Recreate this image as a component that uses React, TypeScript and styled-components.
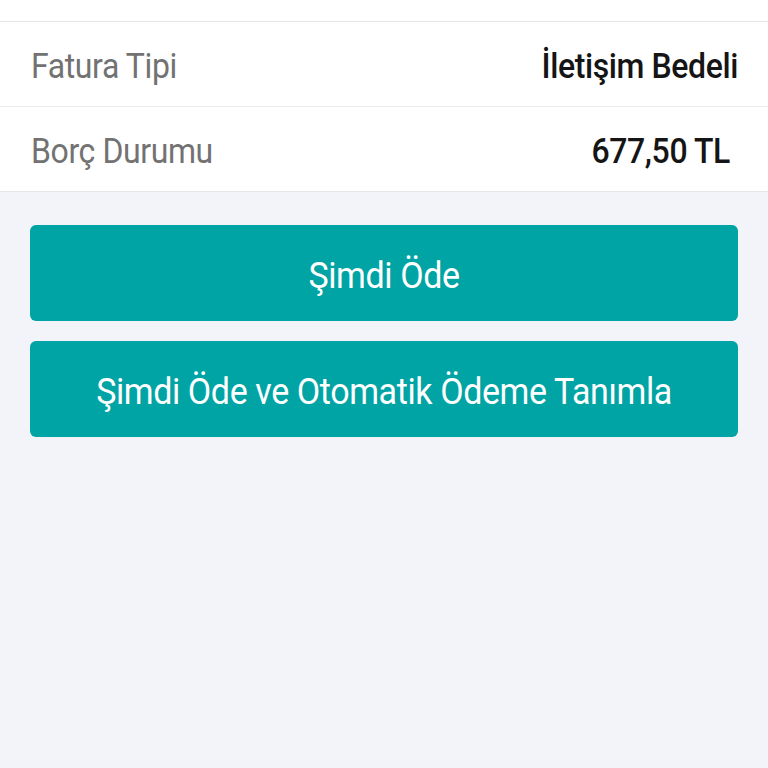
import { createGlobalStyle, styled } from "styled-components"

const GlobalStyle = createGlobalStyle`
  html, body {
    margin: 0;
    padding: 0;
    background: #f3f4f9;
    font-family: Roboto, "Noto Sans", sans-serif;
  }
  * { box-sizing: border-box; }
`

const Page = styled.div`
  min-height: 768px;
  background: #f3f4f9;
`

const TopStrip = styled.div`
  height: 22px;
  background: #ffffff;
  border-bottom: 1px solid #e6e7eb;
`

const InfoList = styled.div`
  background: #ffffff;
  border-bottom: 1px solid #e6e7eb;
`

const Row = styled.div<{ $last?: boolean }>`
  height: ${(p) => (p.$last ? "84px" : "85px")};
  display: flex;
  align-items: center;
  justify-content: space-between;
  padding: 4px 30px 0 31px;
  border-bottom: ${(p) => (p.$last ? "none" : "1px solid #e8e9ed")};
`

const Label = styled.span`
  display: inline-block;
  font-size: 32px;
  color: #727272;
  letter-spacing: -0.4px;
  transform: scaleY(1.08);
`

const Value = styled.span<{ $inset?: number }>`
  display: inline-block;
  font-size: 32px;
  font-weight: 500;
  color: #151515;
  margin-right: ${(p) => p.$inset ?? 0}px;
  letter-spacing: -0.4px;
  transform: scaleY(1.08);
`

const Actions = styled.div`
  display: flex;
  flex-direction: column;
  gap: 20px;
  padding: 33px 30px 0;
`

const PayButton = styled.button`
  height: 96px;
  border: none;
  border-radius: 6px;
  background: #00a4a4;
  color: #ffffff;
  font-family: Roboto, "Noto Sans", sans-serif;
  font-size: 34px;
  letter-spacing: -0.4px;
  padding: 4px 0 0;
  cursor: pointer;

  span {
    display: inline-block;
    transform: scaleY(1.08);
  }
`

function App() {
  return (
    <Page>
      <GlobalStyle />
      <TopStrip />
      <InfoList>
        <Row>
          <Label>Fatura Tipi</Label>
          <Value>İletişim Bedeli</Value>
        </Row>
        <Row $last>
          <Label>Borç Durumu</Label>
          <Value $inset={8}>677,50 TL</Value>
        </Row>
      </InfoList>
      <Actions>
        <PayButton><span>Şimdi Öde</span></PayButton>
        <PayButton><span>Şimdi Öde ve Otomatik Ödeme Tanımla</span></PayButton>
      </Actions>
    </Page>
  )
}

export default App
